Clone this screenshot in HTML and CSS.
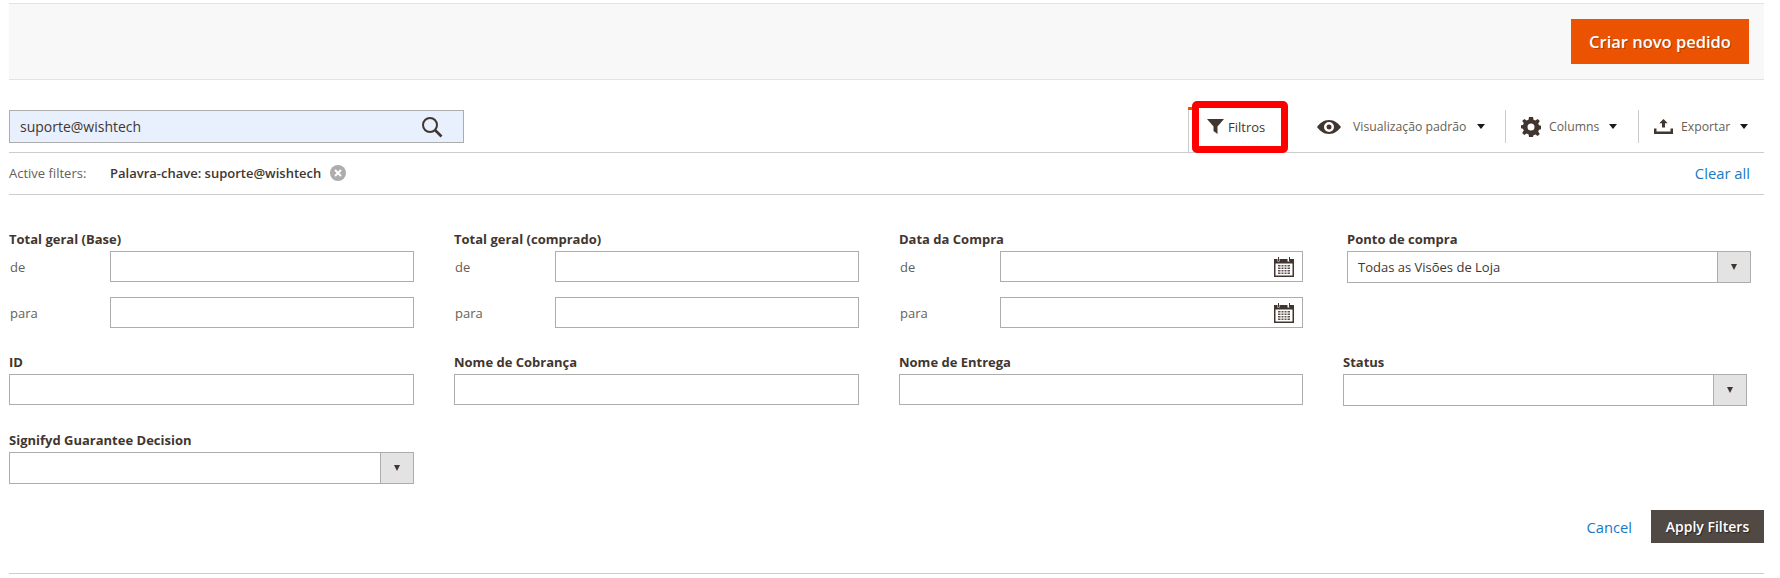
FILE: index.html
```html
<!DOCTYPE html>
<html lang="pt">
<head>
<meta charset="utf-8">
<title>Pedidos</title>
<link rel="stylesheet" href="styles.css">
</head>
<body>
<header class="page-actions">
  <button class="btn-primary">Criar novo pedido</button>
</header>
<section class="toolbar">
  <div class="search">
    <span class="search-text">suporte@wishtech</span>
    <svg class="search-icon" viewBox="0 0 22 22"><circle cx="9" cy="9" r="7" fill="none" stroke="#41362f" stroke-width="2"/><path d="M14 14l6.500 6.500" stroke="#41362f" stroke-width="2.600" fill="none"/></svg>
  </div>
  <div class="tools">
    <div class="tool-filter">
      <svg class="filter-icon" viewBox="0 0 17 15"><path d="M0 0h17L10.500 7.500V15L6.500 12V7.500z" fill="#41362f"/></svg>
      <span>Filtros</span>
    </div>
    <div class="tool tool-view">
      <svg class="eye-icon" viewBox="0 0 24 14"><path fill-rule="evenodd" d="M12 0c5.500 0 9.500 3.500 12 7-2.500 3.500-6.500 7-12 7S2.500 10.500 0 7c2.500-3.500 6.500-7 12-7zm0 2a5 5 0 1 0 0 10 5 5 0 0 0 0-10zm0 2.500a2.500 2.500 0 1 1 0 5 2.500 2.500 0 0 1 0-5z" fill="#41362f"/></svg>
      <span class="tool-label">Visualização padrão</span>
      <i class="caret"></i>
    </div>
    <div class="tool tool-columns">
      <svg class="gear-icon" viewBox="0 0 20 20"><path fill-rule="evenodd" d="M8 0h4l.5 2.800 1.900.8L16.700 2 18.800 4.100l-1.600 2.300.8 1.900 2 .4v3.600l-2 .4-.8 1.900 1.600 2.300-2.100 2.100-2.300-1.600-1.900.8L12 20H8l-.5-2.800-1.900-.8L3.300 18 1.200 15.900l1.600-2.300-.8-1.900-2-.4V8.300l2-.4.800-1.900L1.200 4.100 3.300 2l2.300 1.600 1.900-.8zM10 6.500a3.500 3.500 0 1 0 0 7 3.500 3.500 0 0 0 0-7z" fill="#41362f"/></svg>
      <span class="tool-label">Columns</span>
      <i class="caret"></i>
    </div>
    <div class="tool tool-export">
      <svg class="export-icon" viewBox="0 0 19 15"><path d="M9.500 0l4.200 4.200h-2.700v4.300H8V4.200H5.300zM0 9.500h2.500v3h14v-3H19V15H0z" fill="#41362f"/></svg>
      <span class="tool-label">Exportar</span>
      <i class="caret"></i>
    </div>
  </div>
  <i class="tab-accent"></i>
  <i class="highlight-box"></i>
</section>
<section class="active-filters">
  <span class="af-title">Active filters:</span>
  <span class="af-value">Palavra-chave: suporte@wishtech</span>
  <svg class="af-close" viewBox="0 0 16 16"><circle cx="8" cy="8" r="8" fill="#adadad"/><path d="M5 5l6 6M11 5l-6 6" stroke="#fff" stroke-width="2"/></svg>
  <a class="clear-all">Clear all</a>
</section>
<section class="filters">
  <div class="cell">
    <div class="label">Total geral (Base)</div>
    <div class="range"><span>de</span><div class="input"></div></div>
    <div class="range"><span>para</span><div class="input"></div></div>
  </div>
  <div class="cell">
    <div class="label">Total geral (comprado)</div>
    <div class="range"><span>de</span><div class="input"></div></div>
    <div class="range"><span>para</span><div class="input"></div></div>
  </div>
  <div class="cell">
    <div class="label">Data da Compra</div>
    <div class="range"><span>de</span><div class="input date"><svg class="cal" viewBox="0 0 20 20"><use href="#cal"/></svg></div></div>
    <div class="range"><span>para</span><div class="input date"><svg class="cal" viewBox="0 0 20 20"><use href="#cal"/></svg></div></div>
  </div>
  <div class="cell cell-store">
    <div class="label">Ponto de compra</div>
    <div class="select"><span class="select-value">Todas as Visões de Loja</span><span class="select-btn"><i></i></span></div>
  </div>
  <div class="cell">
    <div class="label">ID</div>
    <div class="input"></div>
  </div>
  <div class="cell">
    <div class="label">Nome de Cobrança</div>
    <div class="input"></div>
  </div>
  <div class="cell">
    <div class="label">Nome de Entrega</div>
    <div class="input"></div>
  </div>
  <div class="cell cell-status">
    <div class="label">Status</div>
    <div class="select"><span class="select-value"></span><span class="select-btn"><i></i></span></div>
  </div>
  <div class="cell">
    <div class="label">Signifyd Guarantee Decision</div>
    <div class="select"><span class="select-value"></span><span class="select-btn"><i></i></span></div>
  </div>
</section>
<footer class="filter-actions">
  <a class="cancel">Cancel</a>
  <button class="btn-apply">Apply Filters</button>
</footer>
<svg class="defs" width="0" height="0"><symbol id="cal" viewBox="0 0 20 20"><path fill-rule="evenodd" d="M0 2h3.500v2.500h2V2h8v2.500h2V2H20v18H0zM1.500 6.500V18.500h17V6.500z" fill="#41362f"/><path d="M4 0h1v4H4zM15 0h1v4h-1z" fill="#41362f"/><path d="M4 8h12v1.500H4zM4 10.500h12V12H4zM4 13h12v1.500H4zM4 15.500h12V17H4z" fill="#5d534c"/><path d="M6.500 8h1v9h-1zM9.500 8h1v9h-1zM12.500 8h1v9h-1z" fill="#fff"/></symbol></svg>
</body>
</html>
```
FILE: styles.css
```css
* { box-sizing: border-box; }
html, body { margin: 0; padding: 0; background: #fff; }
body {
  width: 1780px;
  height: 578px;
  overflow: hidden;
  padding: 3px 16px 0 9px;
  font-family: "Open Sans", "Noto Sans", sans-serif;
  font-size: 13px;
  color: #41362f;
}
.page-actions {
  height: 77px;
  background: #f8f8f8;
  border-top: 1px solid #e3e3e3;
  border-bottom: 1px solid #e3e3e3;
  display: flex;
  justify-content: flex-end;
  align-items: flex-start;
  padding: 15px 15px 0 0;
}
.btn-primary {
  width: 178px;
  height: 45px;
  border: 0;
  padding: 0;
  background: #eb5202;
  color: #fff;
  font: 600 16.500px "Open Sans", sans-serif;
  text-shadow: 1px 1px 0 rgba(0, 0, 0, .25);
}
.toolbar {
  position: relative;
  height: 73px;
  border-bottom: 1px solid #cccccc;
  display: flex;
  justify-content: space-between;
  padding-top: 30px;
}
.search {
  width: 455px;
  height: 33px;
  border: 1px solid #adadad;
  background: #e8f0fe;
  display: flex;
  align-items: center;
  justify-content: space-between;
  padding: 0 20px 0 10px;
  font-size: 14px;
  color: #41362f;
}
.search-icon { width: 22px; height: 22px; }
.tools { display: flex; align-items: center; height: 33px; padding-right: 15px; }
.tool-filter {
  width: 129px;
  height: 42px;
  margin-top: 9px;
  border-left: 1px solid #cccccc;
  display: flex;
  align-items: center;
  gap: 4px;
  padding: 0 0 9px 18px;
  font-size: 13px;
}
.filter-icon { width: 17px; height: 15px; }
.tool {
  display: flex;
  align-items: center;
  height: 33px;
  color: #676056;
  font-size: 12.250px;
}
.tool-label { margin-right: 10px; }
.tool-view { width: 188px; }
.tool-columns { width: 133px; padding-left: 15px; border-left: 1px solid #cccccc; }
.tool-export { width: 111px; padding-left: 15px; border-left: 1px solid #cccccc; }
.eye-icon { width: 24px; height: 14px; margin-right: 12px; }
.gear-icon { width: 20px; height: 20px; margin-right: 8px; }
.export-icon { width: 19px; height: 15px; margin-right: 8px; }
.caret {
  width: 0;
  height: 0;
  border-style: solid;
  border-width: 5px 4.500px 0;
  border-color: #1a1a1a transparent transparent;
}
.tab-accent {
  position: absolute;
  left: 1179px;
  top: 27px;
  width: 8px;
  height: 3px;
  background: #eb5202;
}
.highlight-box {
  position: absolute;
  left: 1183px;
  top: 21px;
  width: 96px;
  height: 52px;
  border: 7px solid #fe0000;
  border-radius: 5px;
}
.active-filters {
  height: 42px;
  border-bottom: 1px solid #cccccc;
  display: flex;
  align-items: center;
  padding: 0 14px 2px 0;
  font-size: 13px;
}
.af-title { width: 101px; color: #676056; }
.af-value { font-weight: 600; color: #41362f; }
.af-close { width: 16px; height: 16px; margin-left: 9px; }
.clear-all { margin-left: auto; color: #1979c3; font-size: 14.800px; }
.filters {
  display: grid;
  grid-template-columns: 405px 405px 404px 405px;
  column-gap: 40px;
  align-items: start;
  padding-top: 35px;
}
.label {
  font-weight: 700;
  font-size: 13px;
  line-height: 18px;
  height: 21px;
  color: #41362f;
}
.cell { margin-bottom: 25px; }
.cell-store { padding-left: 4px; margin-right: -3px; }
.cell-status { margin-right: 1px; }
.range { display: flex; align-items: center; margin-bottom: 15px; color: #676056; font-size: 13px; }
.range:last-child { margin-bottom: 0; }
.range > span { width: 101px; flex: none; padding-left: 1px; }
.input {
  width: 100%;
  height: 31px;
  border: 1px solid #adadad;
  background: #fff;
  display: flex;
  align-items: center;
  justify-content: flex-end;
}
.date { padding-right: 8px; }
.cal { width: 20px; height: 20px; }
.select {
  width: 100%;
  height: 32px;
  border: 1px solid #adadad;
  display: flex;
  align-items: stretch;
  background: #fff;
  color: #41362f;
}
.select-value { flex: 1; padding-left: 10px; line-height: 30px; font-size: 13px; }
.select-btn {
  width: 33px;
  background: #e3e3e3;
  border-left: 1px solid #adadad;
  display: flex;
  align-items: center;
  justify-content: center;
}
.select-btn i {
  width: 0;
  height: 0;
  border-style: solid;
  border-width: 6px 3.500px 0;
  border-color: #41362f transparent transparent;
}
.filter-actions {
  display: flex;
  justify-content: flex-end;
  align-items: center;
  gap: 19px;
  height: 64px;
  margin-top: 1px;
  padding-bottom: 30px;
  border-bottom: 1px solid #cccccc;
}
.cancel { color: #1979c3; font-size: 14.700px; }
.btn-apply {
  width: 113px;
  height: 33px;
  border: 0;
  padding: 0;
  background: #514943;
  color: #fff;
  font: 600 14px "Open Sans", sans-serif;
  text-shadow: 1px 1px 1px rgba(0, 0, 0, .5);
}
.defs { position: absolute; }
```
